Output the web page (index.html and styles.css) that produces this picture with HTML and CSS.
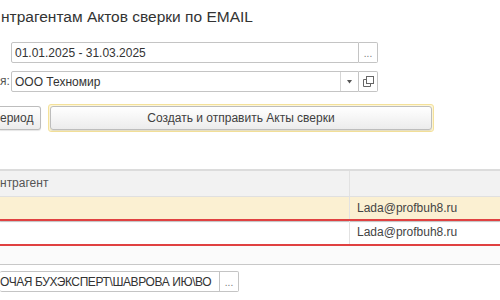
FILE: index.html
```html
<!DOCTYPE html>
<html lang="ru">
<head>
  <meta charset="UTF-8" />
  <title>Рассылка контрагентам Актов сверки</title>
  <link rel="stylesheet" href="styles.css">
</head>
<body>
  <h1 class="title">нтрагентам Актов сверки по EMAIL</h1>

  <!-- Period and organization -->
  <div class="fields">
    <span class="label"></span>
    <div class="field">
      <span class="field-text">01.01.2025 - 31.03.2025</span>
    </div>
    <div class="field-btn"><span class="dots">...</span></div>

    <span class="label">я:</span>
    <div class="field">
      <span class="field-text">ООО Техномир</span>
      <span class="drop">
        <svg width="5" height="4" viewBox="0 0 5 4"><path d="M0 0h5L2.5 3.5z" fill="#555"/></svg>
      </span>
    </div>
    <div class="field-btn">
      <svg width="11" height="11" viewBox="0 0 11 11" fill="none" stroke="#666" stroke-width="1">
        <rect x="3.5" y="0.5" width="7" height="7"/>
        <path d="M3.5 3.5H0.5v7h7V7.5"/>
      </svg>
    </div>
  </div>

  <!-- Commands -->
  <div class="commands">
    <button class="btn btn-period">ериод</button>
    <div class="default-frame">
      <button class="btn btn-main">Создать и отправить Акты сверки</button>
    </div>
  </div>

  <!-- Recipients table -->
  <div class="table">
    <div class="row head">
      <div class="cell c1">нтрагент</div>
      <div class="cell c2"></div>
    </div>
    <div class="row current">
      <div class="cell c1"></div>
      <div class="cell c2">Lada@profbuh8.ru</div>
    </div>
    <div class="mark"></div>
    <div class="row">
      <div class="cell c1"></div>
      <div class="cell c2">Lada@profbuh8.ru</div>
    </div>
    <div class="mark"></div>
    <div class="table-rest"></div>
  </div>

  <!-- Responsible -->
  <div class="bottom">
    <div class="field bottom-field">
      <span class="field-text flush">ОЧАЯ БУХЭКСПЕРТ\ШАВРОВА ИЮ\ВО</span>
    </div>
    <div class="field-btn"><span class="dots">...</span></div>
  </div>
</body>
</html>
```

FILE: styles.css
```css
body {
  margin: 0;
  background: #ffffff;
  color: #404040;
  font-family: "Liberation Sans", Arial, sans-serif;
  font-size: 12px;
  width: 500px;
  overflow: hidden;
}
.title {
  margin: 0;
  height: 42px;
  padding: 8px 0 0 1px;
  box-sizing: border-box;
  font-size: 15.5px;
  font-weight: normal;
  color: #333;
}
/* Period / organization */
.fields {
  display: grid;
  grid-template-columns: 11px 348px 19px;
  grid-auto-rows: 21px;
  row-gap: 8px;
}
.label {
  font-size: 12px;
  line-height: 21px;
  color: #555;
}
.field {
  display: flex;
  align-items: center;
  border: 1px solid #c4c4c4;
  border-radius: 2px 0 0 2px;
  background: #fff;
}
.field-text {
  flex: 1;
  padding-left: 3px;
  color: #333;
  white-space: nowrap;
  overflow: hidden;
}
.drop {
  width: 17px;
  align-self: stretch;
  border-left: 1px solid #d6d6d6;
  display: flex;
  align-items: center;
  justify-content: center;
}
.field-btn {
  border: 1px solid #c4c4c4;
  border-left: none;
  border-radius: 0 2px 2px 0;
  display: flex;
  align-items: center;
  justify-content: center;
  background: #fff;
}
.dots {
  font-size: 10px;
  color: #777;
  margin-top: 2px;
}
/* Commands */
.commands {
  display: flex;
  align-items: center;
  margin-top: 12px;
  height: 27px;
}
.btn {
  font-family: "Liberation Sans", Arial, sans-serif;
  font-size: 12px;
  color: #404040;
  height: 24px;
  border: 1px solid #bdbdbd;
  border-radius: 3px;
  background: linear-gradient(#ffffff, #ececec);
  box-shadow: 0 1px 1px rgba(0, 0, 0, 0.1);
}
.btn-period {
  width: 41px;
  text-align: right;
  padding: 0 12px 0 0;
  border-left: none;
  border-radius: 0 3px 3px 0;
}
.default-frame {
  margin-left: 7px;
  padding: 1px;
  border: 1px solid #f4e19a;
  border-radius: 3px;
  background: #fdf6d8;
}
.btn-main {
  display: block;
  width: 382px;
}
/* Table */
.table {
  margin-top: 38px;
  border-top: 2px solid #dcdcdc;
  border-bottom: 1px solid #c8c8c8;
}
.row {
  display: flex;
  height: 23px;
}
.cell {
  line-height: 23px;
  white-space: nowrap;
  color: #444;
}
.c1 {
  width: 349px;
  border-right: 1px solid #e2e2e2;
}
.c2 {
  flex: 1;
  padding-left: 7px;
}
.head {
  height: 25px;
  background: #f2f2f2;
  border-bottom: 1px solid #e0e0e0;
}
.head .cell {
  line-height: 25px;
  color: #555;
}
.current {
  height: 22px;
  background: #fbf0d2;
}
.current .cell {
  line-height: 22px;
}
.mark {
  height: 2px;
  background: #e04141;
  box-shadow: 0 1px 1px rgba(0, 0, 0, 0.25);
}
.table-rest {
  height: 18px;
  background: #fbfbfb;
}
/* Responsible */
.bottom {
  display: grid;
  grid-template-columns: 220px 19px;
  grid-auto-rows: 21px;
  margin-top: 6px;
}
.bottom-field {
  border-left: none;
}
.flush {
  padding-left: 0;
  letter-spacing: -0.4px;
}
```
